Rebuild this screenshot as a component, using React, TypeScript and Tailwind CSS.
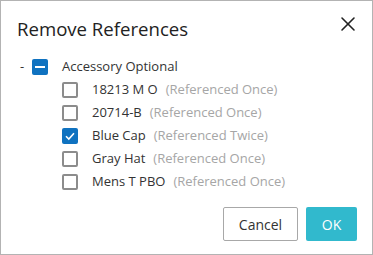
import { X } from 'lucide-react'

type Item = { name: string; note: string; checked?: boolean }

const items: Item[] = [
  { name: '18213 M O', note: '(Referenced Once)' },
  { name: '20714-B', note: '(Referenced Once)' },
  { name: 'Blue Cap', note: '(Referenced Twice)', checked: true },
  { name: 'Gray Hat', note: '(Referenced Once)' },
  { name: 'Mens T PBO', note: '(Referenced Once)' },
]

function Box({ state }: { state: 'off' | 'on' | 'mixed' }) {
  if (state === 'off') {
    return <span className="block w-4 h-4 rounded-[2px] border-2 border-[#8c8c8c] bg-white" />
  }
  return (
    <span className="flex items-center justify-center w-4 h-4 rounded-[2px] bg-[#0f72c0]">
      {state === 'on' ? (
        <svg width="12" height="12" viewBox="0 0 12 12" fill="none">
          <path d="M2 6.2 L4.8 9 L10 3.2" stroke="white" strokeWidth="1.6" />
        </svg>
      ) : (
        <span className="block w-[10px] h-[2px] bg-white" />
      )}
    </span>
  )
}

export default function App() {
  return (
    <div className="w-[373px] h-[255px] bg-white border border-[#b3b3b3] text-[#333] flex flex-col" style={{ fontFamily: '"Segoe UI", "Open Sans", sans-serif' }}>
      {/* Header */}
      <div className="flex items-start justify-between pl-4 pr-3 pt-[14px]">
        <h2 className="text-[18.6px] leading-[28px] text-[#222]">Remove References</h2>
        <button className="-mt-[3px] text-[#222]">
          <X className="w-6 h-6" strokeWidth={1.6} />
        </button>
      </div>

      {/* Tree */}
      <div className="pl-[19px] pt-[13px] text-[13px]">
        <div className="flex items-center h-[22px]">
          <span className="w-[12px]">-</span>
          <Box state="mixed" />
          <span className="ml-[14px]">Accessory Optional</span>
        </div>
        <div className="pl-[42px]">
          {items.map((it) => (
            <div key={it.name} className="flex items-center h-[23px]">
              <Box state={it.checked ? 'on' : 'off'} />
              <span className="ml-[14px]">{it.name}</span>
              <span className="ml-[8px] text-[#a6a6a6]">{it.note}</span>
            </div>
          ))}
        </div>
      </div>

      {/* Footer */}
      <div className="mt-auto flex justify-end gap-2 pr-[15px] pb-[13px]">
        <button className="w-[75px] h-[34px] border border-[#a8a8a8] rounded-[2px] text-[14px] text-[#333] bg-white">Cancel</button>
        <button className="w-[51px] h-[34px] rounded-[2px] text-[14px] text-white bg-[#31b9cd]">OK</button>
      </div>
    </div>
  )
}
